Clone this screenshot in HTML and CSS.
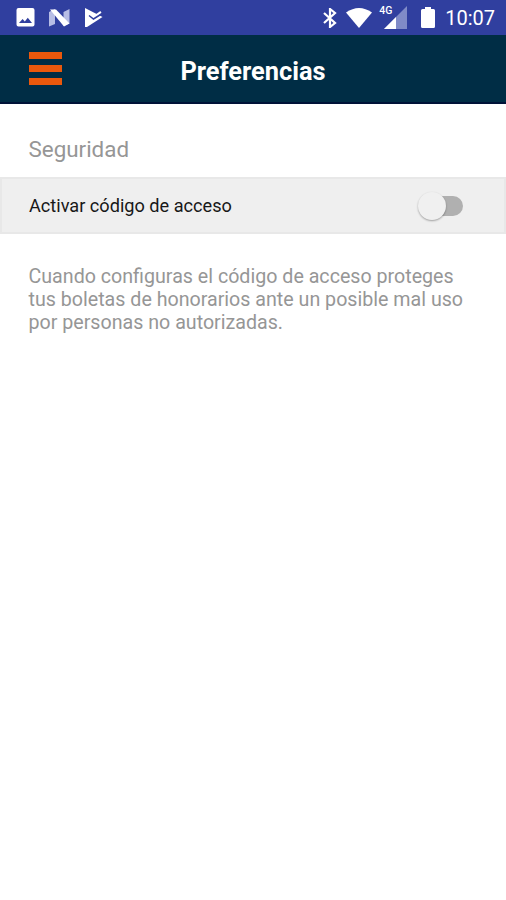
FILE: index.html
```html
<!DOCTYPE html>
<html lang="es">
<head>
<meta charset="utf-8">
<title>Preferencias</title>
<link rel="stylesheet" href="styles.css">
</head>
<body>
<div class="status">
  <div class="notices">
    <svg width="19" height="19" viewBox="0 0 19 19"><path fill="#fff" fill-rule="evenodd" d="M2.500 0h14a2 2 0 0 1 2 2v14.500a2 2 0 0 1-2 2h-14a2 2 0 0 1-2-2V2a2 2 0 0 1 2-2zM3 15h13l-4.200-5.200-3 3.600-2.200-2.400z"/></svg>
    <svg width="21" height="18" viewBox="0 0 21 18"><path fill="#b7bde5" d="M0 3 6 0v15l-6 2.500zM14.500 3 20.500 0v14.500l-6 2.500z"/><path fill="#fff" d="M1 .5H7L20.500 14.500 15 17.500z"/></svg>
    <svg width="20" height="20" viewBox="0 0 20 20"><path fill="#fff" d="M1 0 18.500 9 3 19H1z"/><path fill="none" stroke="#fff" stroke-width="2.200" d="m9 6 2.500 2L17 4"/><path fill="none" stroke="#303f9f" stroke-width="1.500" d="m5 7.500 4.500 3.500L19 5"/></svg>
  </div>
  <div class="system">
    <svg class="bluetooth" width="14" height="20" viewBox="0 0 14 20"><path fill="none" stroke="#fff" stroke-width="2.200" d="m1 5 11 10-5 4V1l5 4L1 15"/></svg>
    <svg class="wifi" width="26" height="20" viewBox="0 0 26 20"><path fill="#fff" d="M0 4.500Q13-4.500 26 4.500L13 20z"/></svg>
    <div class="cell">
      <span class="network">4G</span>
      <svg width="23" height="23" viewBox="0 0 23 23"><path fill="#808bc7" d="M0 23 23 0v23z"/><path fill="#fff" d="M0 23 12 11v12z"/></svg>
    </div>
    <svg class="battery" width="14" height="21" viewBox="0 0 14 21"><path fill="#fff" d="M4 0h6v2h2.500q1.500 0 1.500 1.500v16q0 1.500-1.500 1.500h-11Q0 21 0 19.500v-16Q0 2 1.500 2H4z"/></svg>
    <span class="clock">10:07</span>
  </div>
</div>
<header class="bar">
  <div class="menu"><i></i><i></i><i></i></div>
  <h1>Preferencias</h1>
</header>
<main>
  <h2>Seguridad</h2>
  <div class="row">
    <span class="label">Activar código de acceso</span>
    <div class="switch"><div class="thumb"></div></div>
  </div>
  <p>Cuando configuras el código de acceso proteges<br>tus boletas de honorarios ante un posible mal uso<br>por personas no autorizadas.</p>
</main>
</body>
</html>
```
FILE: styles.css
```css
* { box-sizing: border-box; }
body { margin: 0; background: #fff; font-family: Roboto, sans-serif; }
svg { display: block; flex: none; }
.status { height: 35px; background: #303f9f; display: flex; justify-content: space-between; align-items: flex-start; padding: 0 11px 0 16px; }
.notices { display: flex; align-items: center; gap: 14px; height: 35px; }
.system { display: flex; align-items: center; height: 35px; color: #fff; }
.wifi { margin-left: 9px; }
.cell { position: relative; margin-left: 12px; }
.network { position: absolute; left: -5px; top: -1px; font-size: 10.5px; line-height: 12px; font-weight: 500; }
.battery { margin-left: 14px; }
.clock { margin-left: 10px; padding-top: 1px; font-size: 20px; line-height: 34px; }
.bar { height: 69px; background: #002d45; border-bottom: 2px solid #001238; display: grid; grid-template-columns: 62px 1fr 62px; align-items: center; }
.menu { margin-left: 29px; display: grid; gap: 6px; width: 33px; }
.menu i { height: 7px; background: #ea580c; }
h1 { margin: 5px 0 0; text-align: center; color: #fff; font-size: 25.4px; line-height: 30px; font-weight: 700; }
h2 { margin: 0; padding: 30px 28.5px 0; height: 73px; color: #969696; font-size: 22.4px; line-height: 31px; font-weight: 400; }
.row { height: 57px; padding: 0 41px 0 27px; display: flex; justify-content: space-between; align-items: center; background: #efefef; border: 2px solid #e8e8e8; }
.label { color: #181818; font-size: 18.15px; line-height: 24px; }
.switch { width: 42px; height: 20px; border-radius: 10px; background: #b0b0b0; position: relative; }
.thumb { position: absolute; left: -3px; top: -4px; width: 28px; height: 28px; border-radius: 50%; background: #f0f0f0; box-shadow: 0 1px 2px #0005; }
p { margin: 31px 28.5px 0; color: #969696; font-size: 19.65px; line-height: 23px; white-space: nowrap; }
```
